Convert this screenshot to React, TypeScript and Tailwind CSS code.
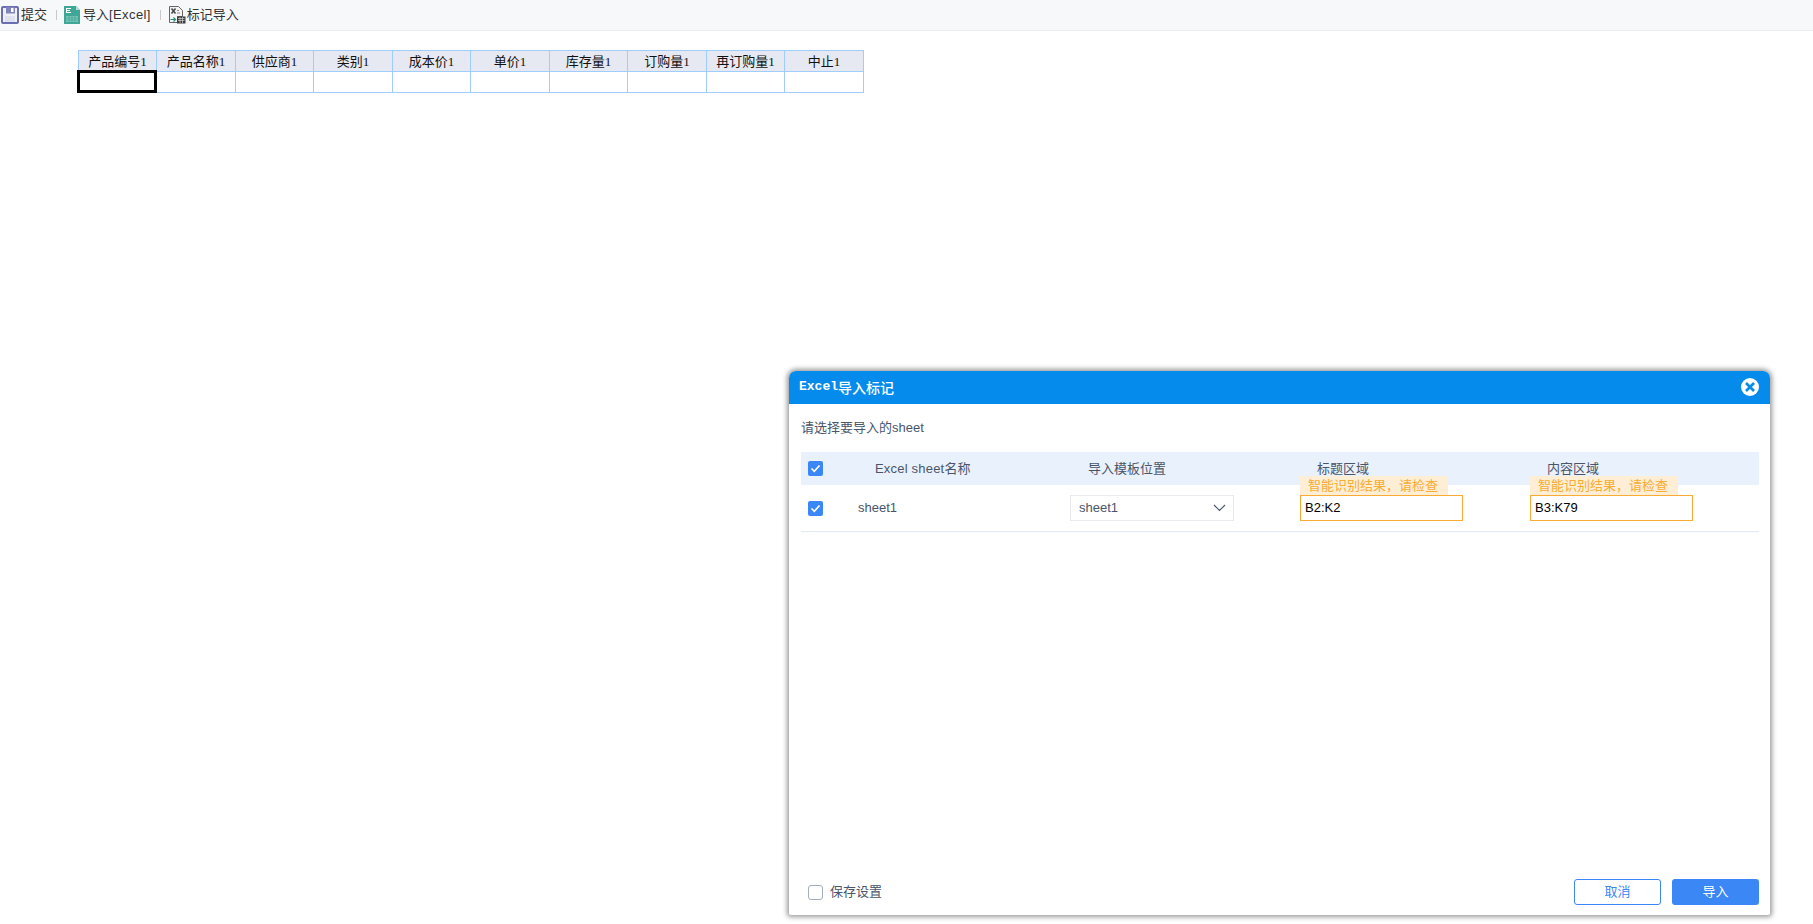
const headers = ["产品编号1", "产品名称1", "供应商1", "类别1", "成本价1", "单价1", "库存量1", "订购量1", "再订购量1", "中止1"]

function SaveIcon() {
  return (
    <svg width="18" height="18" viewBox="0 0 18 18">
      <rect x="1" y="1" width="16" height="16" rx="1" fill="#eef0f8" stroke="#6a6fb0" strokeWidth="2" />
      <rect x="5" y="1" width="9" height="6.500" fill="#7f84bd" />
      <rect x="10" y="2" width="2.500" height="4" fill="#fff" />
      <rect x="4" y="10" width="10" height="6" fill="#dfe1f0" />
    </svg>
  )
}

function ExcelIcon() {
  return (
    <svg width="18" height="18" viewBox="0 0 18 18">
      <path d="M1 0h12l4 4v14H1z" fill="#3fa796" />
      <path d="M13 0l4 4h-4z" fill="#b5e0d8" />
      <path d="M3 2h5v1H4v1h3v1H4v1h4v1H3z" fill="#fff" />
      <path d="M3 10h12v6H3z" fill="#7cc6b8" />
      <path d="M6 10v6M9 10v6M12 10v6M3 12h12M3 14h12" stroke="#3fa796" strokeWidth="0.700" />
    </svg>
  )
}

function MarkImportIcon() {
  return (
    <svg width="18" height="18" viewBox="0 0 18 18">
      <path d="M1.500 0.500h9l4 4v6h-5v6h-8z" fill="#f4f4f4" stroke="#666" strokeWidth="1" />
      <path d="M3.500 2.500l4 5M7.500 2.500l-4 5" stroke="#444" strokeWidth="1.500" />
      <path d="M9 4h2v1H9zM9 6.500h3v1H9z" fill="#888" />
      <rect x="9" y="10.500" width="8.500" height="7" fill="#3b3b3b" />
      <path d="M10 12.500h6.500M10 14.500h6.500M12 11v6M14.500 11v6" stroke="#d8d8d8" strokeWidth="0.700" />
      <path d="M2.500 13.500h5M5.500 11.500l2 2-2 2" fill="none" stroke="#2d8f7a" strokeWidth="1.200" />
    </svg>
  )
}

function Check({ checked }: { checked: boolean }) {
  if (!checked) {
    return <span className="block w-[15px] h-[15px] rounded-[3px] border border-[#a3adbd] bg-white"></span>
  }
  return (
    <span className="flex items-center justify-center w-[15px] h-[15px] rounded-[2px] bg-[#3b87f5]">
      <svg width="11" height="9" viewBox="0 0 11 9">
        <path d="M1.500 4.500l2.800 2.800 5.200-5.800" fill="none" stroke="#fff" strokeWidth="1.700" />
      </svg>
    </span>
  )
}

function AreaInput({ value }: { value: string }) {
  return (
    <div className="relative w-[163px] h-[26px] border border-[#f9ab33] flex items-center pl-[4px] text-[13px] text-black">
      {value}
      <div className="absolute left-[-1px] top-[-20px] w-[148px] h-[19px] bg-[#feeed6] text-[#f9ab33] text-[13px] leading-[19px] pl-[8px] whitespace-nowrap">
        智能识别结果，请检查
      </div>
    </div>
  )
}

export default function App() {
  return (
    <div className="relative h-[924px] w-full overflow-hidden bg-white font-['Liberation_Sans','Noto_Sans_CJK_SC',sans-serif] text-[#49556b]">
      <div className="flex items-center h-[31px] bg-[#f7f8fa] border-b border-[#e9ebef] text-[13px] text-[#333]">
        <div className="flex items-center pl-[1px]">
          <SaveIcon />
          <span className="ml-[2px]">提交</span>
        </div>
        <span className="ml-[9px] mr-[6px] w-px h-[10px] bg-[#c8c8c8]"></span>
        <div className="flex items-center">
          <ExcelIcon />
          <span className="ml-[2px]">导入<span className="tracking-[0.4px]">[Excel]</span></span>
        </div>
        <span className="ml-[9px] mr-[7px] w-px h-[10px] bg-[#c8c8c8]"></span>
        <div className="flex items-center">
          <MarkImportIcon />
          <span className="ml-[1px]">标记导入</span>
        </div>
      </div>

      <div className="ml-[78px] mt-[19px] w-[787px]">
        <table className="border-collapse table-fixed w-[786px] font-['Liberation_Serif','Noto_Sans_CJK_SC',serif] text-[13px] text-[#111]">
          <colgroup>
            {headers.map((h, i) => (
              <col key={h} className={i % 2 === 0 ? "w-[78px]" : "w-[79px]"} />
            ))}
          </colgroup>
          <tbody>
            <tr className="h-[21px] bg-[#e6e9f1]">
              {headers.map((h) => (
                <td key={h} className="border border-[#9fcdff] text-center p-0 leading-none">{h}</td>
              ))}
            </tr>
            <tr className="h-[21px]">
              {headers.map((h, i) => (
                <td key={h} className="relative border border-[#9fcdff] p-0">
                  {i === 0 && <div className="absolute left-[-2px] top-[-2px] w-[80px] h-[23px] border-[3px] border-black"></div>}
                </td>
              ))}
            </tr>
          </tbody>
        </table>
      </div>

      <div className="absolute left-[789px] top-[371px] w-[981px] h-[544px] bg-white rounded-t-[7px] rounded-b-[2px] shadow-[0_0_5px_2px_rgba(0,0,0,0.4)] flex flex-col">
        <div className="flex items-center justify-between h-[33px] bg-[#058beb] rounded-t-[7px] pl-[10px] pr-[11px] pb-[1px] text-white font-bold">
          <span className="flex items-center">
            <span className="font-['Liberation_Mono'] text-[13px]">Excel</span>
            <span className="font-['Noto_Sans_CJK_SC'] text-[14px] leading-none font-medium">导入标记</span>
          </span>
          <svg width="18" height="18" viewBox="0 0 18 18">
            <circle cx="9" cy="9" r="9" fill="#fff" />
            <path d="M5 5l8 8M13 5l-8 8" stroke="#058beb" strokeWidth="2.600" />
          </svg>
        </div>

        <div className="flex-1 flex flex-col px-[12px]">
          <div className="mt-[15px] text-[13px] leading-[18px]">请选择要导入的sheet</div>

          <div className="mt-[15px] grid grid-cols-[57px_212px_230px_230px_1fr] items-center h-[33px] bg-[#e9f1fc] text-[13px] w-[958px]">
            <div className="pl-[7px]"><Check checked /></div>
            <div className="pl-[17px]"><span className="tracking-[0.2px]">Excel sheet</span>名称</div>
            <div className="pl-[18px]">导入模板位置</div>
            <div className="pl-[17px]">标题区域</div>
            <div className="pl-[17px]">内容区域</div>
          </div>

          <div className="grid grid-cols-[57px_212px_230px_230px_1fr] items-center h-[47px] border-b border-[#deebf7] text-[13px] w-[958px]">
            <div className="pl-[7px]"><Check checked /></div>
            <div>sheet1</div>
            <div className="flex items-center justify-between w-[164px] h-[26px] border border-[#e7e9ed] pl-[8px] pr-[7px]">
              <span>sheet1</span>
              <svg width="13" height="8" viewBox="0 0 13 8">
                <path d="M1 1l5.500 5.500L12 1" fill="none" stroke="#49556b" strokeWidth="1.100" />
              </svg>
            </div>
            <AreaInput value="B2:K2" />
            <AreaInput value="B3:K79" />
          </div>

          <div className="mt-auto mb-[10px] flex items-center justify-between w-[958px]">
            <label className="flex items-center pl-[7px] text-[13px]">
              <Check checked={false} />
              <span className="ml-[7px]">保存设置</span>
            </label>
            <div className="flex gap-[11px]">
              <button className="w-[87px] h-[26px] rounded-[3px] border border-[#3b87f5] bg-white text-[#3b87f5] text-[13px]">取消</button>
              <button className="w-[87px] h-[26px] rounded-[3px] bg-[#3b87f5] text-white text-[13px]">导入</button>
            </div>
          </div>
        </div>
      </div>
    </div>
  )
}
